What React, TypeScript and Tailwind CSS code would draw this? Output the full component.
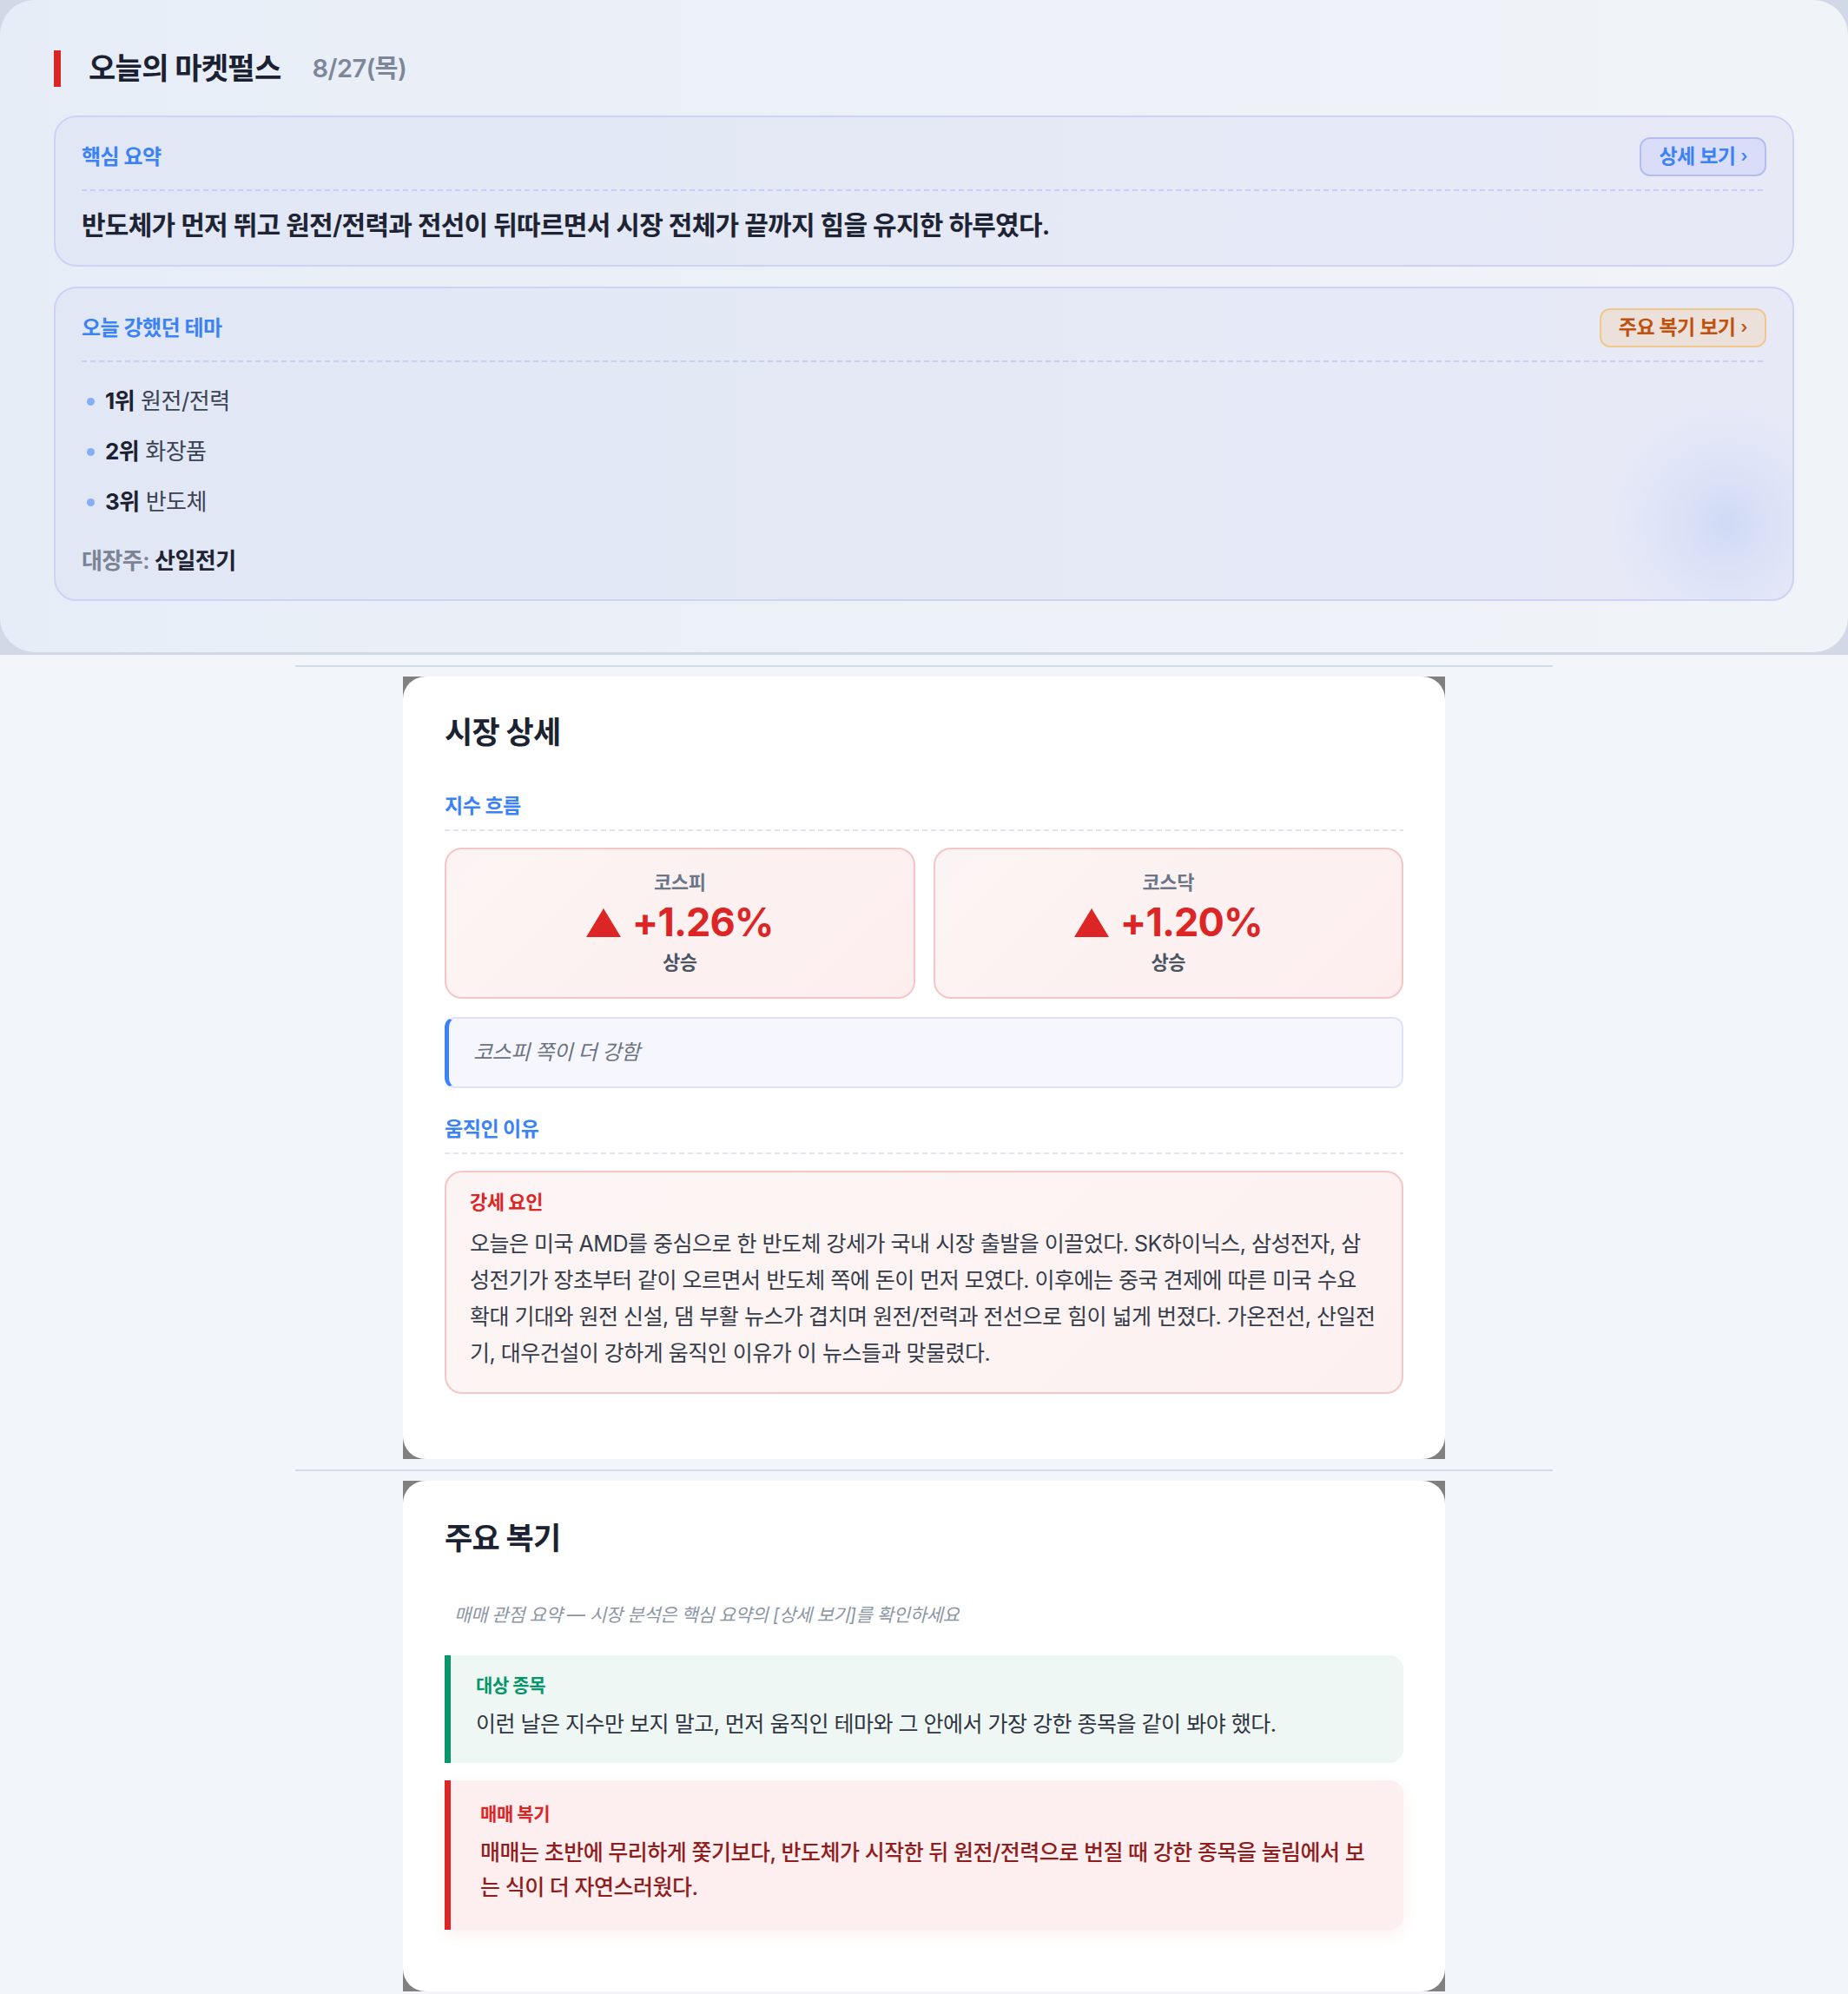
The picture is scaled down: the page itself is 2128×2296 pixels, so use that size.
import React from 'react';

const themes = [
  { rank: '1위', name: '원전/전력' },
  { rank: '2위', name: '화장품' },
  { rank: '3위', name: '반도체' },
];

const indices = [
  { label: '코스피', value: '+1.26%', state: '상승' },
  { label: '코스닥', value: '+1.20%', state: '상승' },
];

function Dashed({ light = false }: { light?: boolean }) {
  return (
    <div
      className={
        light
          ? 'h-[2px] w-full bg-[repeating-linear-gradient(90deg,#dfe2f8_0px,#dfe2f8_6px,transparent_6px,transparent_10px)]'
          : 'h-[2px] w-full bg-[repeating-linear-gradient(90deg,#c8cef6_0px,#c8cef6_6px,transparent_6px,transparent_10px)]'
      }
    />
  );
}

function UpTriangle() {
  return (
    <svg width="40" height="33" viewBox="0 0 40 33" className="shrink-0">
      <polygon points="20,0 40,33 0,33" fill="#dc2626" />
    </svg>
  );
}

function Hero() {
  return (
    <div className="bg-[#d1d9e6] pb-[3px]">
      <div className="rounded-[40px] bg-[linear-gradient(90deg,#e7edf7,#eef2f8_60%,#f0f3f8)] px-[62px] pt-[58px] pb-[59px]">
        {/* title */}
        <div className="flex items-center">
          <div className="h-[42px] w-[8px] bg-[#dc2626]" />
          <h1 className="ml-[32px] text-[34px] leading-[42px] font-bold tracking-[-0.02em] text-[#1b2130]">
            오늘의 마켓펄스
          </h1>
          <span className="ml-[36px] text-[29px] leading-[42px] font-semibold tracking-[-0.02em] text-[#7d8799]">
            8/27(목)
          </span>
        </div>

        {/* summary */}
        <div className="mt-[33px] rounded-[26px] border-2 border-[#cdd3f6] bg-[linear-gradient(90deg,#e1e7f5,#e5e9f6_50%,#e7e9f7)] px-[30px] pt-[23px] pb-[26px]">
          <div className="flex items-center justify-between">
            <span className="text-[24px] leading-[30px] font-bold tracking-[-0.02em] text-[#3b82f6]">핵심 요약</span>
            <button className="flex h-[45px] items-center gap-[6px] rounded-[12px] border-2 border-[#b5bdef] bg-[#d9ddf7] px-[20px] text-[23px] font-semibold tracking-[-0.02em] text-[#3b82f6]">
              상세 보기 <span className="text-[19px]">›</span>
            </button>
          </div>
          <div className="mt-[15px]">
            <Dashed />
          </div>
          <p className="mt-[19px] text-[30px] leading-[40px] font-semibold tracking-[-0.025em] text-[#1e2433]">
            반도체가 먼저 뛰고 원전/전력과 전선이 뒤따르면서 시장 전체가 끝까지 힘을 유지한 하루였다.
          </p>
        </div>

        {/* themes */}
        <div className="mt-[23px] rounded-[26px] border-2 border-[#cdd3f6] bg-[radial-gradient(circle_at_1924px_271px,#cfdaf6_0px,rgba(207,218,246,0.5)_50px,rgba(207,218,246,0)_135px),linear-gradient(90deg,#e1e7f5,#e5e9f6_50%,#e7e9f7)] px-[30px] pt-[23px] pb-[26px]">
          <div className="flex items-center justify-between">
            <span className="text-[24px] leading-[30px] font-bold tracking-[-0.02em] text-[#3b82f6]">오늘 강했던 테마</span>
            <button className="flex h-[45px] items-center gap-[6px] rounded-[12px] border-2 border-[#efc88e] bg-[#ece0da] px-[20px] text-[23px] font-semibold tracking-[-0.02em] text-[#c2500f]">
              주요 복기 보기 <span className="text-[19px]">›</span>
            </button>
          </div>
          <div className="mt-[15px]">
            <Dashed />
          </div>
          <ul className="mt-[27px] flex flex-col gap-[22px]">
            {themes.map((t) => (
              <li key={t.rank} className="flex items-center text-[26px] leading-[36px] tracking-[-0.02em]">
                <span className="ml-[6px] h-[9px] w-[9px] rounded-full bg-[#86aef6]" />
                <span className="ml-[12px] font-bold text-[#1b2130]">{t.rank}</span>
                <span className="ml-[7px] text-[#3b4353]">{t.name}</span>
              </li>
            ))}
          </ul>
          <p className="mt-[32px] text-[26px] leading-[36px] font-semibold tracking-[-0.02em]">
            <span className="text-[#7b8495]">대장주:</span> <span className="text-[#1e2433]">산일전기</span>
          </p>
        </div>
      </div>
    </div>
  );
}

function Divider() {
  return <div className="mx-auto h-[2px] w-[1448px] bg-[#d4dbe7]" />;
}

function SectionLabel({ children }: { children: React.ReactNode }) {
  return (
    <div>
      <h3 className="text-[23px] leading-[30px] font-bold tracking-[-0.02em] text-[#3b82f6]">{children}</h3>
      <div className="mt-[12px]">
        <Dashed light />
      </div>
    </div>
  );
}

function MarketDetail() {
  return (
    <div className="mx-auto w-[1200px] bg-[#808080]">
      <div className="rounded-[26px] bg-white px-[48px] pt-[42px] pb-[75px]">
        <h2 className="text-[35px] leading-[44px] font-bold tracking-[-0.02em] text-[#1b2231]">시장 상세</h2>

        <div className="mt-[48px]">
          <SectionLabel>지수 흐름</SectionLabel>
        </div>

        <div className="mt-[19px] grid grid-cols-2 gap-[21px]">
          {indices.map((i) => (
            <div
              key={i.label}
              className="flex flex-col items-center rounded-[20px] border-2 border-[#f5c6c6] bg-[linear-gradient(135deg,#fcf4f4,#fdeeee)] pt-[24px] pb-[26px]"
            >
              <span className="text-[22px] leading-[28px] font-semibold tracking-[-0.02em] text-[#6b7689]">{i.label}</span>
              <div className="mt-[6px] flex h-[52px] items-center gap-[13px]">
                <UpTriangle />
                <span className="text-[45px] leading-[52px] font-bold tracking-[-0.02em] text-[#dc2626]">{i.value}</span>
              </div>
              <span className="mt-[6px] text-[22px] leading-[28px] font-semibold tracking-[-0.02em] text-[#4b5563]">{i.state}</span>
            </div>
          ))}
        </div>

        <div className="mt-[21px] flex h-[82px] items-center rounded-[12px] border-2 border-l-[5px] border-[#dfe2fb] border-l-[#3b82f6] bg-[#f6f7fe] pl-[28px]">
          <span className="text-[24px] italic tracking-[-0.02em] text-[#6b7280]">코스피 쪽이 더 강함</span>
        </div>

        <div className="mt-[32px]">
          <SectionLabel>움직인 이유</SectionLabel>
        </div>

        <div className="mt-[19px] rounded-[20px] border-2 border-[#f5c6c6] bg-[linear-gradient(135deg,#fcf4f4,#fdf3f3_60%,#fdf0f0)] pt-[19px] pr-[28px] pb-[24px] pl-[27px]">
          <h4 className="text-[22px] leading-[30px] font-bold tracking-[-0.02em] text-[#dc2626]">강세 요인</h4>
          <p className="mt-[12px] text-[25px] leading-[42px] tracking-[-0.02em] text-[#353c4a]">
            오늘은 미국 AMD를 중심으로 한 반도체 강세가 국내 시장 출발을 이끌었다. SK하이닉스, 삼성전자, 삼성전기가 장초부터 같이 오르면서 반도체 쪽에 돈이 먼저 모였다. 이후에는 중국 견제에 따른 미국 수요 확대 기대와 원전 신설, 댐 부활 뉴스가 겹치며 원전/전력과 전선으로 힘이 넓게 번졌다. 가온전선, 산일전기, 대우건설이 강하게 움직인 이유가 이 뉴스들과 맞물렸다.
          </p>
        </div>
      </div>
    </div>
  );
}

function TradeReview() {
  return (
    <div className="mx-auto w-[1200px] bg-[#808080]">
      <div className="rounded-[26px] bg-white px-[48px] pt-[44px] pb-[71px]">
        <h2 className="text-[35px] leading-[44px] font-bold tracking-[-0.02em] text-[#1b2231]">주요 복기</h2>

        <p className="mt-[53px] pl-[11px] text-[21px] leading-[28px] italic tracking-[-0.02em] text-[#8b95a5]">
          매매 관점 요약 — 시장 분석은 핵심 요약의 [상세 보기]를 확인하세요
        </p>

        <div className="mt-[32px] rounded-r-[16px] border-l-[7px] border-[#059669] bg-[#eff7f4] pt-[20px] pb-[25px] pl-[29px] pr-[24px]">
          <h4 className="text-[21px] leading-[30px] font-bold tracking-[-0.02em] text-[#059669]">대상 종목</h4>
          <p className="mt-[9px] text-[25px] leading-[40px] tracking-[-0.02em] text-[#2f3542]">
            이런 날은 지수만 보지 말고, 먼저 움직인 테마와 그 안에서 가장 강한 종목을 같이 봐야 했다.
          </p>
        </div>

        <div className="mt-[20px] rounded-r-[16px] border-l-[7px] border-[#dc2626] bg-[#fdeeef] pt-[24px] pb-[29px] pl-[34px] pr-[24px] shadow-[0_6px_18px_rgba(220,38,38,0.07)]">
          <h4 className="text-[21px] leading-[30px] font-bold tracking-[-0.02em] text-[#dc2626]">매매 복기</h4>
          <p className="mt-[9px] text-[25px] leading-[40px] font-medium tracking-[-0.02em] text-[#8f1d1d]">
            매매는 초반에 무리하게 쫓기보다, 반도체가 시작한 뒤 원전/전력으로 번질 때 강한 종목을 눌림에서 보는 식이 더 자연스러웠다.
          </p>
        </div>
      </div>
    </div>
  );
}

export default function App() {
  return (
    <div className="min-h-screen bg-[#f2f5f9] font-['Inter','Noto_Sans_CJK_KR',sans-serif]">
      <Hero />
      <div className="mt-[12px]">
        <Divider />
      </div>
      <div className="mt-[11px]">
        <MarketDetail />
      </div>
      <div className="mt-[12px]">
        <Divider />
      </div>
      <div className="mt-[11px]">
        <TradeReview />
      </div>
    </div>
  );
}
